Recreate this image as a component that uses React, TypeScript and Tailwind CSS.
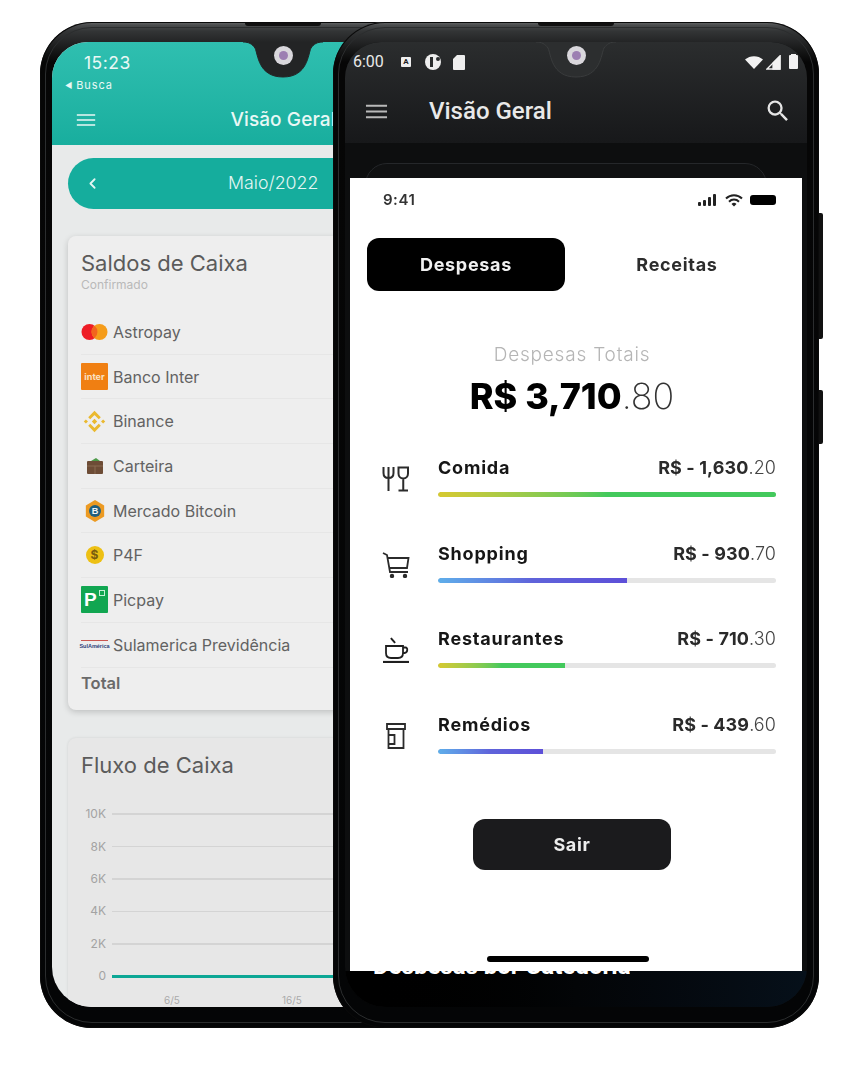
import type { ReactNode } from "react";
import { ChevronLeft } from "lucide-react";
import { MdSearch } from "react-icons/md";

const Burger = ({ className }: { className: string }) => (
  <svg viewBox="0 0 24 16" className={className} fill="none" stroke="currentColor" strokeWidth="1.9">
    <path d="M1 2h22M1 8h22M1 14h22" />
  </svg>
);

// teardrop notch + front camera, both sit over the screen top
const Notch = ({ fill, stroke }: { fill: string; stroke: string }) => (
  <>
    <svg viewBox="0 0 80 36" className="absolute left-[203px] top-[20px] h-[36px] w-[80px]">
      <path d="M0 0C6 0 9 2 12 6C15 12 15 35 40 35C65 35 65 12 68 6C71 2 74 0 80 0" fill={fill} stroke={stroke} strokeWidth="1" />
    </svg>
    <div className="absolute left-[233.5px] top-[23.5px] flex h-[19px] w-[19px] items-center justify-center rounded-full bg-[#d9d7dc]">
      <div className="h-[9px] w-[9px] rounded-full bg-[#9c7fb2]" />
    </div>
  </>
);

function PhoneShell({ left, children }: { left: string; children: ReactNode }) {
  return (
    <div className={`absolute top-[22px] h-[1006px] w-[486px] rounded-[52px] bg-[linear-gradient(180deg,#6a6c6d_0,#4a4c4d_3px,#333536_9px,#232425_20px,#060606_40px,#040506_100%)] shadow-[inset_0_0_0_1px_#0a0a0a] ${left}`}>
      <div className="absolute inset-[5px] rounded-[47px] border border-[#2b2d2e]" />
      <div className="absolute left-[205px] top-[1px] h-[3px] w-[76px] rounded-b bg-[#111]" />
      {children}
    </div>
  );
}

const Mastercard = () => (
  <svg viewBox="0 0 27 18" className="h-[18px] w-[27px]">
    <circle cx="8.5" cy="9" r="8" fill="#ee1c25" />
    <circle cx="18.5" cy="9" r="8" fill="#f59c1a" />
    <path d="M13.5 2.8a8 8 0 0 1 0 12.4a8 8 0 0 1 0-12.4Z" fill="#f2641e" />
  </svg>
);

const InterLogo = () => (
  <div className="flex h-[27px] w-[27px] items-center justify-center rounded-[1px] bg-[#f07f12] font-['Inter',sans-serif] text-[9px] font-bold leading-none text-[#fbe2c4]">
    inter
  </div>
);

const Binance = () => (
  <svg viewBox="0 0 24 24" className="h-[23px] w-[23px]" fill="none" stroke="#eab92f" strokeWidth="3">
    <path d="M6.5 8.5L12 3l5.5 5.5M6.5 15.5L12 21l5.5-5.500" />
    <path d="M12 9.200L14.800 12L12 14.800L9.200 12zM3 9.800L5.200 12L3 14.200L0.800 12zM21 9.800L23.200 12L21 14.200L18.800 12z" fill="#eab92f" stroke="none" />
  </svg>
);

const Wallet = () => (
  <svg viewBox="0 0 18 18" className="h-[18px] w-[18px]">
    <path d="M5 4l5-3 4 3v3H5z" fill="#4d9a48" />
    <rect x="1" y="4" width="16" height="13" rx="1" fill="#6d4c36" />
    <path d="M1 9h16M9 9v8" stroke="#8a6a50" strokeWidth="1" />
  </svg>
);

const BitcoinHex = () => (
  <svg viewBox="0 0 20 24" className="h-[22px] w-[20px]">
    <path d="M10 0l10 6v12l-10 6L0 18V6z" fill="#ec9a22" />
    <circle cx="10" cy="12" r="6.5" fill="#1f5f80" />
    <text x="10" y="15.5" textAnchor="middle" fontSize="10" fontWeight="700" fill="#f3f3f3" fontFamily="Liberation Sans, sans-serif">B</text>
  </svg>
);

const Coin = () => (
  <div className="flex h-[18px] w-[18px] items-center justify-center rounded-full bg-[#edc014] font-['Inter',sans-serif] text-[12px] font-bold leading-none text-[#7a5d10]">
    $
  </div>
);

const Picpay = () => (
  <div className="relative flex h-[27px] w-[27px] items-center rounded-[1px] bg-[#11a651] pl-[3px] font-['Liberation_Sans',sans-serif] text-[19px] font-bold leading-none text-white">
    P
    <div className="absolute right-[3px] top-[4px] h-[6px] w-[6px] border border-[#c5f0d6]" />
  </div>
);

const Sulamerica = () => (
  <div className="flex h-[10px] w-[27px] flex-col items-center justify-end border-t border-[#c9564f] font-['Liberation_Sans',sans-serif] text-[5.5px] font-bold leading-none text-[#2d3f79]">
    SulAmérica
  </div>
);

const accounts = [
  { name: "Astropay", logo: <Mastercard /> },
  { name: "Banco Inter", logo: <InterLogo /> },
  { name: "Binance", logo: <Binance /> },
  { name: "Carteira", logo: <Wallet /> },
  { name: "Mercado Bitcoin", logo: <BitcoinHex /> },
  { name: "P4F", logo: <Coin /> },
  { name: "Picpay", logo: <Picpay /> },
  { name: "Sulamerica Previdência", logo: <Sulamerica /> },
];

const ticks = ["10K", "8K", "6K", "4K", "2K"];

function BackPhone() {
  return (
    <PhoneShell left="left-[40px]">
      <div className="absolute left-[12px] top-[20px] flex h-[965px] w-[462px] flex-col overflow-hidden rounded-t-[36px] rounded-b-[40px] bg-[#e8eaea] font-['Inter',sans-serif]">
        <header className="h-[103px] shrink-0 bg-gradient-to-b from-[#2fbfb0] to-[#18ae9e] text-[#e9f8f5]">
          <div className="pl-[32px] pt-[9px] text-[17.5px] leading-[24px] tracking-[0.5px]">15:23</div>
          <div className="mt-[3px] flex items-center gap-[3px] pl-[13px] text-[11px] leading-[14px] tracking-[0.9px]">
            <span className="text-[8px]">◀</span>
            <span>Busca</span>
          </div>
          <div className="mt-[14px] grid h-[28px] grid-cols-[1fr_auto_1fr] items-center px-[24px]">
            <Burger className="h-[14px] w-[20px]" />
            <span className="text-[19px] font-medium tracking-[0.1px]">Visão Geral</span>
            <span />
          </div>
        </header>
        <div className="flex flex-1 flex-col px-[16px] pt-[13px]">
          <div className="flex h-[51px] shrink-0 items-center rounded-full bg-[#15ad9d] pl-[16px] text-[#e4f6f3]">
            <ChevronLeft size={17} strokeWidth={2.5} />
            <span className="ml-[127px] text-[17.8px] font-light">Maio/2022</span>
          </div>
          <section className="mt-[27px] h-[474px] shrink-0 rounded-[8px] bg-[#eeeeee] pl-[13px] pt-[13px] shadow-[0_2px_6px_rgba(0,0,0,0.18)]">
            <h2 className="text-[22px] leading-[28px] text-[#5b5b5b]">Saldos de Caixa</h2>
            <p className="text-[12px] leading-[16px] text-[#b9b9b9]">Confirmado</p>
            <ul className="mt-[17px]">
              {accounts.map((a) => (
                <li key={a.name} className="flex h-[44.7px] items-center gap-[5px] border-b border-[#e6e6e6] text-[16px] text-[#626262]">
                  <span className="flex w-[27px] justify-center">{a.logo}</span>
                  {a.name}
                </li>
              ))}
            </ul>
            <div className="flex h-[31px] items-center text-[16.5px] font-semibold text-[#6a6a6a]">Total</div>
          </section>
          <section className="mt-[28px] h-[300px] shrink-0 rounded-[8px] bg-[#e7e7e7] pl-[13px] pt-[13px] shadow-[0_0_3px_rgba(0,0,0,0.1)]">
            <h2 className="text-[22px] leading-[28px] text-[#5b5b5b]">Fluxo de Caixa</h2>
            <div className="mt-[19px] text-[12px] text-[#a3a3a3]">
              {ticks.map((t) => (
                <div key={t} className="flex h-[32.4px] items-center">
                  <span className="w-[25px] text-right">{t}</span>
                  <span className="ml-[6px] h-[1.5px] flex-1 bg-[#d4d4d4]" />
                </div>
              ))}
              <div className="flex h-[32.4px] items-center">
                <span className="w-[25px] text-right">0</span>
                <span className="ml-[6px] h-[3px] flex-1 bg-[#0ca795]" />
              </div>
              <div className="mt-[1px] flex text-[10px] text-[#aaaaaa]">
                <span className="ml-[83px]">6/5</span>
                <span className="ml-[102px]">16/5</span>
              </div>
            </div>
          </section>
        </div>
      </div>
      <Notch fill="#232425" stroke="#232425" />
    </PhoneShell>
  );
}

const Fork = () => (
  <svg viewBox="0 0 28 26" className="h-[26px] w-[28px]" fill="none" stroke="#2b2b2b" strokeWidth="2">
    <path d="M1.5 1v6c0 3 1.5 5 5 5s5-2 5-5V1M6.5 1v24" />
    <path d="M16.5 1.5H26v6c0 3-2 5-4.750 5s-4.750-2-4.750-5zM21.250 12.500V24M16.500 24.500H26" />
  </svg>
);

const Cart = () => (
  <svg viewBox="0 0 28 26" className="h-[26px] w-[28px]" fill="none" stroke="#2b2b2b" strokeWidth="1.8">
    <path d="M1 1l4 2 3 17h18M6 6h20.500l-1.500 10H7.500" />
    <circle cx="10" cy="24" r="1.3" fill="#2b2b2b" />
    <circle cx="23" cy="24" r="1.3" fill="#2b2b2b" />
  </svg>
);

const Cup = () => (
  <svg viewBox="0 0 28 26" className="h-[26px] w-[28px]" fill="none" stroke="#1f1f1f" strokeWidth="1.8">
    <path d="M9 1c1 2 3 3 4 5" />
    <path d="M4 9h17v7c0 3-2 5-5 5H9c-3 0-5-2-5-5zM21 10.500h2.500c2.500 0 2.500 5-1 5.500L21 16.500" />
    <path d="M1 25h26" strokeWidth="2.2" />
  </svg>
);

const Jar = () => (
  <svg viewBox="0 0 28 26" className="h-[26px] w-[28px]" fill="none" stroke="#2b2b2b" strokeWidth="1.8">
    <path d="M5 1h18v5H5zM6.500 6v19h15V6M6.500 12h6v9h-6" />
  </svg>
);

const greenBar = "from-[#d6c92f] via-[#43c95c] to-[#43c95c]";
const blueBar = "from-[#5eaeea] via-[#5f63da] to-[#5d4fd8]";

const expenses = [
  { name: "Comida", whole: "R$ - 1,630", cents: ".20", pct: 100, bar: greenBar, icon: <Fork /> },
  { name: "Shopping", whole: "R$ - 930", cents: ".70", pct: 56, bar: blueBar, icon: <Cart /> },
  { name: "Restaurantes", whole: "R$ - 710", cents: ".30", pct: 37.5, bar: greenBar, icon: <Cup /> },
  { name: "Remédios", whole: "R$ - 439", cents: ".60", pct: 31, bar: blueBar, icon: <Jar /> },
];

function ExpensePanel() {
  return (
    <div className="absolute left-[5px] top-[136px] h-[793px] w-[452px] overflow-hidden bg-white font-['Inter',sans-serif] text-[#161616]">
      <div className="blur-[0.4px]">
        <div className="mt-[12px] flex h-[20px] items-center justify-between pl-[33px] pr-[26px]">
          <span className="text-[15px] font-semibold tracking-[0.5px] text-[#333]">9:41</span>
          <div className="flex items-center gap-[7px]">
            <svg viewBox="0 0 20 12" className="h-[12px] w-[20px]" fill="#222">
              <rect x="0" y="8" width="3" height="4" rx="1" />
              <rect x="5" y="6" width="3" height="6" rx="1" />
              <rect x="10" y="3" width="3" height="9" rx="1" />
              <rect x="15" y="0" width="3" height="12" rx="1" />
            </svg>
            <svg viewBox="0 0 18 13" className="h-[13px] w-[18px]" fill="none" stroke="#222" strokeWidth="2">
              <path d="M1 4.500a11.500 11.500 0 0 1 16 0M4 7.700a7 7 0 0 1 10 0" />
              <path d="M9 12.500l-2.500-2.500a3.500 3.500 0 0 1 5 0z" fill="#222" stroke="none" />
            </svg>
            <div className="h-[10px] w-[26px] rounded-[3px] bg-black" />
          </div>
        </div>
        <div className="ml-[17px] mt-[28px] flex gap-[13px] text-[18px] font-bold tracking-[0.7px]">
          <div className="flex h-[53px] w-[198px] items-center justify-center rounded-[12px] bg-black text-[#f0f0f0]">Despesas</div>
          <div className="flex h-[53px] w-[198px] items-center justify-center text-[#2c2c2c]">Receitas</div>
        </div>
        <p className="mt-[51px] w-[444px] text-center text-[19px] font-light leading-[26px] tracking-[0.8px] text-[#b5b5b5]">Despesas Totais</p>
        <p className="mt-[6px] w-[444px] text-center text-[36px] leading-[44px]">
          <span className="font-extrabold text-black">R$ 3,710</span>
          <span className="font-extralight text-[#333]">.80</span>
        </p>
        <div className="mt-[38px] flex flex-col gap-[44.5px] pl-[32px] pr-[26px]">
          {expenses.map((e) => (
            <div key={e.name} className="flex gap-[28px]">
              <div className="mt-[10px] h-[26px] w-[28px] shrink-0">{e.icon}</div>
              <div className="flex-1">
                <div className="flex h-[22px] items-center justify-between pt-[1px] text-[18px] font-bold">
                  <span className="tracking-[0.8px]">{e.name}</span>
                  <span className="tracking-[0.1px] text-[#2a2a2a]">
                    {e.whole}
                    <span className="font-light text-[#444]">{e.cents}</span>
                  </span>
                </div>
                <div className="mt-[14px] h-[5px] overflow-hidden rounded-full bg-[#e5e5e5]">
                  <div className={`h-full rounded-l-full bg-gradient-to-r ${e.bar}`} style={{ width: `${e.pct}%` }} />
                </div>
              </div>
            </div>
          ))}
        </div>
        <div className="ml-[123px] mt-[65.5px] flex h-[51px] w-[198px] items-center justify-center rounded-[12px] bg-[#1b1b1d] text-[18px] font-bold tracking-[0.7px] text-[#eeeeee]">
          Sair
        </div>
        <div className="ml-[137px] mt-[86px] h-[6px] w-[162px] rounded-full bg-black" />
      </div>
    </div>
  );
}

function FrontPhone() {
  return (
    <>
      <div className="absolute left-[815px] top-[213px] h-[126px] w-[8px] rounded-r-[2px] bg-[#111]" />
      <div className="absolute left-[815px] top-[390px] h-[54px] w-[8px] rounded-r-[2px] bg-[#111]" />
      <PhoneShell left="left-[333px]">
        <div className="absolute left-[12px] top-[20px] h-[965px] w-[462px] overflow-hidden rounded-t-[36px] rounded-b-[40px] bg-[#0d0e0f] font-['Roboto',sans-serif] text-[#e9e9e9]">
          <header className="h-[101px] bg-gradient-to-b from-[#2b2d2e] to-[#17181a]">
            <div className="flex h-[40px] items-center justify-between pl-[8px] pr-[9px]">
              <div className="flex items-center">
                <span className="text-[16px]">6:00</span>
                <span className="ml-[17px] flex h-[10px] w-[10px] items-center justify-center rounded-[1px] bg-[#eeeeee] text-[8px] font-bold leading-none text-[#222]">A</span>
                <div className="relative ml-[14px] h-[16px] w-[16px] rounded-full bg-[#eeeeee]">
                  <div className="absolute left-[5px] top-[3px] h-[10px] w-[3px] bg-[#2a2c2d]" />
                  <div className="absolute right-[1px] top-[3px] h-[4px] w-[4px] rounded-full bg-[#2a2c2d]" />
                </div>
                <svg viewBox="0 0 12 15" className="ml-[12px] h-[15px] w-[12px]" fill="#eeeeee">
                  <path d="M4 0h7a1 1 0 0 1 1 1v13a1 1 0 0 1-1 1H1a1 1 0 0 1-1-1V4z" />
                </svg>
              </div>
              <div className="flex items-center gap-[3px]">
                <svg viewBox="0 0 18 13" className="h-[13px] w-[18px]" fill="#f2f2f2">
                  <path d="M0 3.500C5-1 13-1 18 3.500L9 13z" />
                </svg>
                <svg viewBox="0 0 15 15" className="h-[15px] w-[15px]" fill="none" stroke="#f2f2f2" strokeWidth="1.3">
                  <path d="M14 1v13H1z" />
                  <path d="M14 1v13H7V8z" fill="#f2f2f2" />
                </svg>
                <div className="relative ml-[5px] h-[14px] w-[9px] rounded-[1px] bg-[#f2f2f2]">
                  <div className="absolute -top-[1px] left-[2px] h-[2px] w-[5px] bg-[#f2f2f2]" />
                </div>
              </div>
            </div>
            <div className="flex h-[60px] items-center pb-[2px] pl-[20px] pr-[15px]">
              <Burger className="h-[17px] w-[23px] text-[#b9b9b9]" />
              <span className="ml-[41px] text-[24px] font-medium leading-none">Visão Geral</span>
              <MdSearch className="ml-auto text-[#e5e5e5]" size={28} />
            </div>
          </header>
          <div className="ml-[20px] mt-[20px] h-[40px] w-[402px] rounded-t-[22px] border border-[#25272a] bg-[#101112]" />
          <div className="absolute inset-x-0 top-[929px] h-[36px] bg-gradient-to-r from-[#000] via-[#030507] to-[#06101a]" />
          <div className="absolute left-[28px] top-[929px] h-[3px] overflow-hidden">
            <div className="mt-[-21px] whitespace-nowrap text-[24px] font-bold leading-[32px] text-white">Despesas por Categoria</div>
          </div>
          <ExpensePanel />
        </div>
        <Notch fill="#2c2e2f" stroke="#3a3c3d" />
      </PhoneShell>
    </>
  );
}

export default function App() {
  return (
    <div className="relative h-[1065px] w-[862px] overflow-hidden bg-white">
      <BackPhone />
      <FrontPhone />
    </div>
  );
}
